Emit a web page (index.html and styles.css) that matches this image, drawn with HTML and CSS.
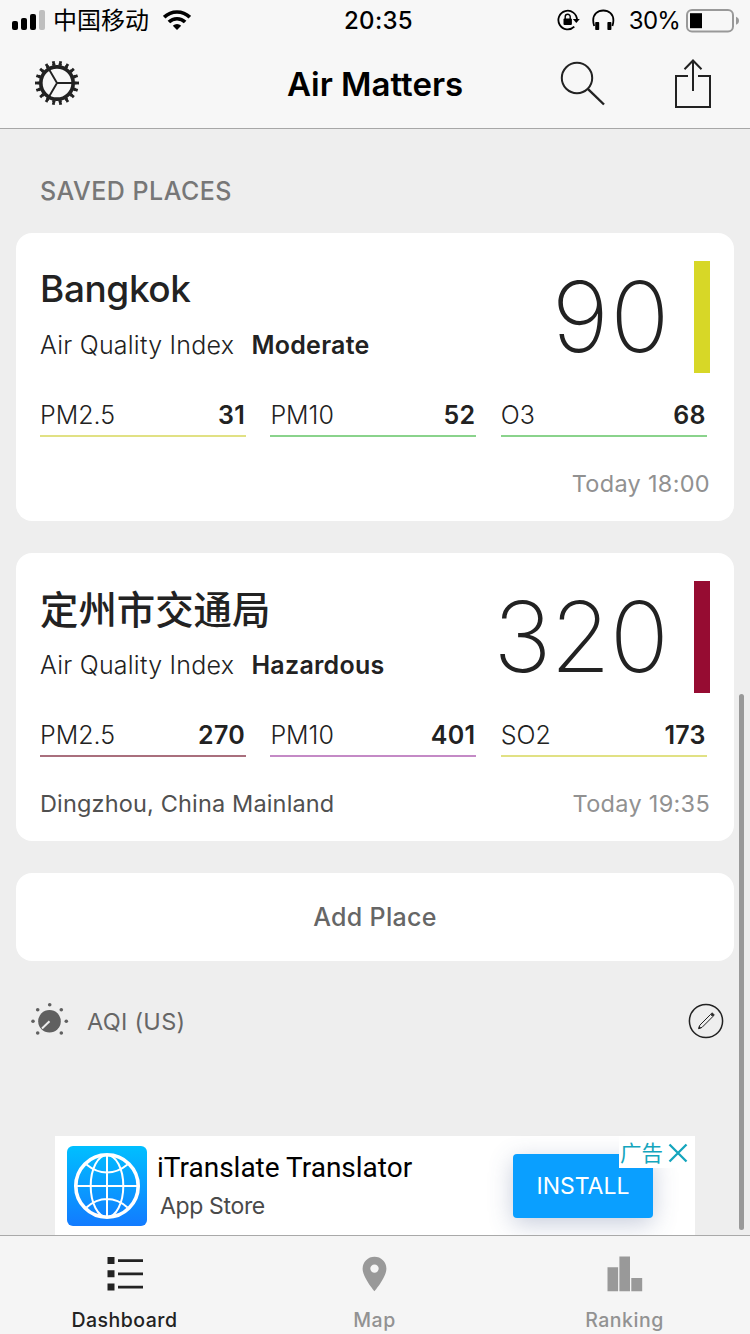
FILE: index.html
```html
<!DOCTYPE html>
<html lang="en">
<head>
  <meta charset="UTF-8" />
  <meta name="viewport" content="width=device-width, initial-scale=1" />
  <title>Air Matters</title>
  <link rel="stylesheet" href="styles.css">
</head>
<body>

  <div class="status-bar">
    <div class="status-left">
      <svg class="signal" width="34" height="20" viewBox="0 0 34 20">
        <rect x="0" y="11" width="6" height="9" rx="2" />
        <rect x="9" y="8" width="6" height="12" rx="2" />
        <rect x="18" y="4" width="6" height="16" rx="2" />
        <rect x="27" y="0" width="6" height="20" rx="2" fill="#bfbfbf" />
      </svg>
      <span class="carrier">中国移动</span>
      <svg class="wifi" width="28" height="20" viewBox="0 0 28 20">
        <g fill="none" stroke="#000" stroke-width="3.6">
          <path d="M1.2 7.2a18.2 18.2 0 0 1 25.6 0" />
          <path d="M5.9 12.1a11.4 11.4 0 0 1 16.2 0" />
        </g>
        <path d="M14 20l-4.2-4.3a6 6 0 0 1 8.4 0z" />
      </svg>
    </div>
    <span class="clock">20:35</span>
    <div class="status-right">
      <svg class="rotation-lock" width="24" height="22" viewBox="0 0 24 22">
        <path d="M17.3 17.6A9.3 9.3 0 1 1 20 11" fill="none" stroke="#000" stroke-width="1.8" />
        <path d="M15.8 10h7l-3.5 4z" />
        <rect x="6.5" y="9.5" width="8.4" height="6.5" rx="1" />
        <path d="M8.2 10V7.8a2.5 2.5 0 0 1 5 0V10" fill="none" stroke="#000" stroke-width="1.4" />
      </svg>
      <svg class="headphones" width="24" height="22" viewBox="0 0 24 22">
        <path d="M2.2 17Q1.2 14 1.2 11.3C1.2 5.5 5.5 1.5 11.3 1.5S21.4 5.5 21.4 11.3Q21.4 14 20.4 17" fill="none" stroke="#000" stroke-width="1.8" />
        <rect x="3.2" y="13" width="4" height="8" rx=".8" />
        <rect x="15.4" y="13" width="4" height="8" rx=".8" />
      </svg>
      <span class="percent">30%</span>
      <svg class="battery" width="54" height="24" viewBox="0 0 54 24">
        <rect x="1" y="1" width="46" height="21.5" rx="5" fill="none" stroke="#999" stroke-width="2" />
        <rect x="4" y="4.2" width="12" height="15" />
        <path d="M50 7.8q3 1.2 3 4t-3 4z" fill="#999" />
      </svg>
    </div>
  </div>

  <header class="nav-bar">
    <svg class="gear" width="46" height="46" viewBox="-23 -23 46 46" fill="none" stroke="#222">
      <circle r="16.2" stroke-width="3.7" />
      <circle r="18.5" stroke-width="2" pathLength="180" stroke-dasharray="5 5" stroke-dashoffset="2.5" />
      <circle r="20.2" stroke-width="3.6" pathLength="180" stroke-dasharray="3.8 6.2" stroke-dashoffset="1.9" />
      <path d="M0 0H15M0 0L-7.9 -13.4M0 0L-7.9 13.4" stroke-width="1.9" />
    </svg>
    <h1>Air Matters</h1>
    <div class="nav-actions">
      <svg class="search" width="46" height="46" viewBox="0 0 46 46" fill="none" stroke="#222" stroke-width="2">
        <circle cx="17" cy="17" r="15.2" />
        <path d="M27.8 27.8L44 43.5" stroke-width="2.4" />
      </svg>
      <svg class="share" width="38" height="50" viewBox="0 0 38 50" fill="none" stroke="#222" stroke-width="2">
        <path d="M14 17H2v31h34V17H24M19 1.5V32M10.5 10.2L19 1.5l8.5 8.7" />
      </svg>
    </div>
  </header>

  <main class="content">
    <h2 class="section-title">SAVED PLACES</h2>

    <section class="card">
      <div class="summary">
        <div class="place">
          <h3>Bangkok</h3>
          <p class="index"><span class="index-label">Air Quality Index</span> <b>Moderate</b></p>
        </div>
        <div class="score">90</div>
        <div class="level moderate"></div>
      </div>
      <div class="metrics">
        <div class="metric yellow"><span>PM2.5</span><b>31</b></div>
        <div class="metric green"><span>PM10</span><b>52</b></div>
        <div class="metric green"><span>O3</span><b>68</b></div>
      </div>
      <div class="card-footer">
        <span class="region"></span>
        <span class="time">Today 18:00</span>
      </div>
    </section>

    <section class="card">
      <div class="summary">
        <div class="place">
          <h3 class="zh">定州市交通局</h3>
          <p class="index"><span class="index-label">Air Quality Index</span> <b>Hazardous</b></p>
        </div>
        <div class="score three-digit">320</div>
        <div class="level hazardous"></div>
      </div>
      <div class="metrics">
        <div class="metric maroon"><span>PM2.5</span><b>270</b></div>
        <div class="metric purple"><span>PM10</span><b>401</b></div>
        <div class="metric yellow"><span>SO2</span><b>173</b></div>
      </div>
      <div class="card-footer">
        <span class="region">Dingzhou, China Mainland</span>
        <span class="time">Today 19:35</span>
      </div>
    </section>

    <button class="add-place">Add Place</button>

    <div class="standard">
      <svg class="dial" width="38" height="34" viewBox="0 0 38 34" fill="#606060">
        <circle cx="18.5" cy="18.3" r="11.3" />
        <path d="M18.5 18.3L11 25.5" stroke="#eee" stroke-width="2" />
        <circle cx="18.7" cy="1.8" r="1.8" />
        <circle cx="6.7" cy="6.8" r="1.8" />
        <circle cx="30.3" cy="6.8" r="1.8" />
        <circle cx="2" cy="18.3" r="1.8" />
        <circle cx="35.3" cy="18.3" r="1.8" />
        <circle cx="6.7" cy="30" r="1.8" />
        <circle cx="30.3" cy="30" r="1.8" />
      </svg>
      <span class="standard-name">AQI (US)</span>
      <svg class="edit" width="36" height="36" viewBox="0 0 36 36" fill="none" stroke="#222">
        <circle cx="18" cy="18" r="16.6" stroke-width="1.5" />
        <path d="M10.8 25.5l1-3.3L22.6 11.4l2.2 2.2L14 24.4z" stroke-width="1" />
        <path d="M22.9 11l1.3-1.3 2.2 2.2-1.3 1.3zM10.5 25.8l.7-2.2 1.5 1.5z" fill="#222" stroke-width=".6" />
      </svg>
    </div>

    <aside class="ad">
      <svg class="ad-logo" width="80" height="80" viewBox="0 0 80 80">
        <defs>
          <linearGradient id="sky" x1="0" y1="0" x2="0" y2="1">
            <stop offset="0" stop-color="#00bfff" />
            <stop offset="1" stop-color="#127bff" />
          </linearGradient>
        </defs>
        <rect width="80" height="80" rx="6" fill="url(#sky)" />
        <g fill="none" stroke="#fff" stroke-width="2">
          <circle cx="40" cy="40" r="31.2" stroke-width="3.6" />
          <ellipse cx="40" cy="40" rx="16.3" ry="31" />
          <path d="M40 9v62M9 40h62M19.5 18.5Q29 26.5 40 26.5T60.5 18.5M19.5 61.5Q29 53 40 53T60.5 61.5" />
        </g>
      </svg>
      <div class="ad-text">
        <p class="ad-title">iTranslate Translator</p>
        <p class="ad-store">App Store</p>
      </div>
      <button class="install">INSTALL</button>
      <div class="ad-choices">
        <span>广告</span>
        <svg width="20" height="20" viewBox="0 0 20 20"><path d="M1.5 1.5l17 17M18.5 1.5l-17 17" stroke="#14a5bd" stroke-width="2.3" /></svg>
      </div>
    </aside>

    <div class="scrollbar"></div>
  </main>

  <nav class="tab-bar">
    <a class="tab active">
      <svg width="36" height="36" viewBox="0 0 36 36" fill="#222">
        <path d="M.5 1h7v7h-7zM.5 14.3h7v7h-7zM.5 27.6h7v7h-7zM11 3.2h25v2.7H11zM11 16.5h25v2.7H11zM11 29.8h25v2.7H11z" />
      </svg>
      <span>Dashboard</span>
    </a>
    <a class="tab">
      <svg width="36" height="36" viewBox="0 0 36 36" fill="#999">
        <path fill-rule="evenodd" d="M17.5 .7A11.9 11.9 0 0 0 5.6 12.6C5.6 21.5 17.5 35.2 17.5 35.2S29.4 21.5 29.4 12.6A11.9 11.9 0 0 0 17.5 .7zM17.5 8.4a4.2 4.2 0 1 1 0 8.4a4.2 4.2 0 0 1 0-8.4z" />
      </svg>
      <span>Map</span>
    </a>
    <a class="tab">
      <svg width="36" height="36" viewBox="0 0 36 36" fill="#999">
        <path d="M.5 11.2h10.6v24H.5zM12.4.5H23v34.7H12.400zM24.300 22h10.900v13.200H24.300z" />
      </svg>
      <span>Ranking</span>
    </a>
  </nav>

</body>
</html>
```
FILE: styles.css
```css
* {
  margin: 0;
  padding: 0;
  box-sizing: border-box;
}
body {
  width: 750px;
  height: 1334px;
  display: flex;
  flex-direction: column;
  overflow: hidden;
  background-color: #eee;
  color: #222;
  font-family: Inter, "Noto Sans CJK SC", sans-serif;
  white-space: nowrap;
}
svg {
  display: block;
  flex: none;
}
button {
  border: none;
  font-family: inherit;
}

/* status bar */
.status-bar {
  height: 40px;
  flex: none;
  display: grid;
  grid-template-columns: 332px auto 1fr;
  padding: 0 10px 0 12px;
  background-color: #f7f7f7;
  color: #000;
  line-height: 41px;
}
.status-left,
.status-right {
  display: flex;
}
.status-right {
  justify-content: flex-end;
}
.signal {
  margin-top: 10px;
}
.carrier {
  margin-left: 7px;
  font-size: 24px;
  font-family: "Noto Sans CJK SC", sans-serif;
  line-height: 38px;
}
.wifi {
  margin: 10px 0 0 14px;
}
.clock {
  font-size: 24px;
  font-weight: 500;
  letter-spacing: 0.3px;
}
.rotation-lock {
  margin: 9px 11px 0 0;
}
.headphones {
  margin: 9px 13px 0 0;
}
.percent {
  margin-right: 6px;
  font-size: 24px;
  letter-spacing: -0.8px;
}
.battery {
  margin-top: 9px;
}

/* navigation bar */
.nav-bar {
  height: 89px;
  flex: none;
  display: grid;
  grid-template-columns: 1fr auto 1fr;
  padding: 0 38px;
  background-color: #f7f7f7;
  border-bottom: 1px solid #a7a7a7;
}
.gear {
  margin: 20px 0 0 -4px;
}
h1 {
  color: #000;
  font-size: 33px;
  font-weight: 600;
  line-height: 88px;
}
.nav-actions {
  display: flex;
  justify-content: flex-end;
}
.search {
  margin: 21px 68px 0 0;
}
.share {
  margin-top: 19px;
}

/* places */
.content {
  position: relative;
  height: 1106px;
  flex: none;
  padding: 0 16px;
  overflow: hidden;
}
.section-title {
  height: 104px;
  padding: 46px 0 0 24px;
  color: #777;
  font-size: 25px;
  font-weight: 500;
  line-height: 32px;
  letter-spacing: 0.5px;
}
.card {
  height: 288px;
  margin-bottom: 32px;
  padding: 28px 24px 0;
  background-color: #fff;
  border-radius: 16px;
}
.summary {
  display: flex;
  height: 112px;
}
.place {
  flex: 1;
}
h3 {
  height: 56px;
  font-size: 37px;
  font-weight: 500;
  line-height: 56px;
  letter-spacing: -0.4px;
}
.zh {
  font-family: "Noto Sans CJK SC", sans-serif;
  font-size: 38.4px;
  line-height: 52px;
  letter-spacing: 0;
}
.index {
  font-size: 25px;
  font-weight: 300;
  line-height: 56px;
  letter-spacing: 0.23px;
}
.index b {
  margin-left: 10px;
  font-weight: 600;
  letter-spacing: 0.25px;
}
.score {
  margin-right: 23px;
  font-size: 98px;
  font-weight: 200;
  line-height: 112px;
  letter-spacing: 1.5px;
}
.three-digit {
  margin-right: 26px;
  letter-spacing: -1px;
}
.level {
  width: 16px;
  height: 112px;
}
.moderate {
  background-color: #d7d727;
}
.hazardous {
  background-color: #960c32;
}
.metrics {
  display: grid;
  grid-template-columns: repeat(3, 206px);
  gap: 24.4px;
  margin-top: 24px;
}
.metric {
  display: flex;
  justify-content: space-between;
  height: 40px;
  border-bottom: 2px solid;
  font-size: 25px;
  font-weight: 300;
  line-height: 36px;
}
.metric span,
.metric b {
  color: #222;
}
.metric b {
  margin-right: 1px;
  font-weight: 600;
  letter-spacing: 0.3px;
}
.metric.yellow {
  border-color: #e1e184;
}
.metric.green {
  border-color: #8ad38c;
}
.metric.maroon {
  border-color: #a96f7d;
}
.metric.purple {
  border-color: #c48ac6;
}
.card-footer {
  display: flex;
  justify-content: space-between;
  margin-top: 29px;
  font-size: 23.5px;
  line-height: 36px;
}
.region {
  color: #505050;
  letter-spacing: 0.15px;
}
.time {
  color: #919191;
  letter-spacing: 0.3px;
}
.add-place {
  display: block;
  width: 718px;
  height: 88px;
  background-color: #fff;
  border-radius: 16px;
  color: #666;
  font-size: 25px;
  font-weight: 500;
  letter-spacing: 0.3px;
}

/* index standard */
.standard {
  display: flex;
  align-items: center;
  height: 120px;
  padding: 0 10px 0 15px;
  color: #666;
}
.standard-name {
  flex: 1;
  margin-left: 18px;
  font-size: 23.5px;
  letter-spacing: 0.3px;
}
.dial {
  margin-top: -2px;
}

/* banner */
.ad {
  position: relative;
  display: flex;
  width: 640px;
  height: 100px;
  margin: 55px 0 0 39px;
  padding: 10px 42px 0 12px;
  background-color: #fff;
}
.ad-text {
  flex: 1;
  padding-left: 10px;
}
.ad-title {
  color: #000;
  font-family: Roboto, sans-serif;
  font-size: 28px;
  line-height: 43px;
}
.ad-store {
  padding-left: 3px;
  color: #4a4a4a;
  font-size: 23px;
  line-height: 34px;
  letter-spacing: -0.35px;
}
.install {
  width: 140px;
  height: 64px;
  margin-top: 8px;
  background-color: #0a9fff;
  border-radius: 4px;
  box-shadow: 0 6px 24px rgba(70, 90, 140, 0.3);
  color: #fff;
  font-size: 23px;
}
.ad-choices {
  position: absolute;
  top: 0;
  right: 0;
  display: flex;
  gap: 5px;
  width: 76px;
  height: 32px;
  padding-left: 1px;
  background-color: #fff;
  color: #14a5bd;
  font-family: "Noto Sans CJK SC", sans-serif;
  font-size: 21.5px;
  line-height: 32px;
}
.ad-choices svg {
  margin-top: 7px;
}
.scrollbar {
  position: absolute;
  top: 565px;
  right: 6px;
  width: 5px;
  height: 536px;
  border-radius: 3px;
  background-color: #999;
}

/* tab bar */
.tab-bar {
  display: flex;
  height: 99px;
  flex: none;
  background-color: #f5f5f5;
  border-top: 1px solid #a9a9a9;
}
.tab {
  flex: 1;
  display: flex;
  flex-direction: column;
  align-items: center;
  padding: 20px 1px 0 0;
  color: #929292;
  font-size: 19.5px;
  font-weight: 500;
}
.tab span {
  margin-top: 15px;
  line-height: 26px;
  letter-spacing: 0.5px;
}
.active {
  color: #222;
}
```
